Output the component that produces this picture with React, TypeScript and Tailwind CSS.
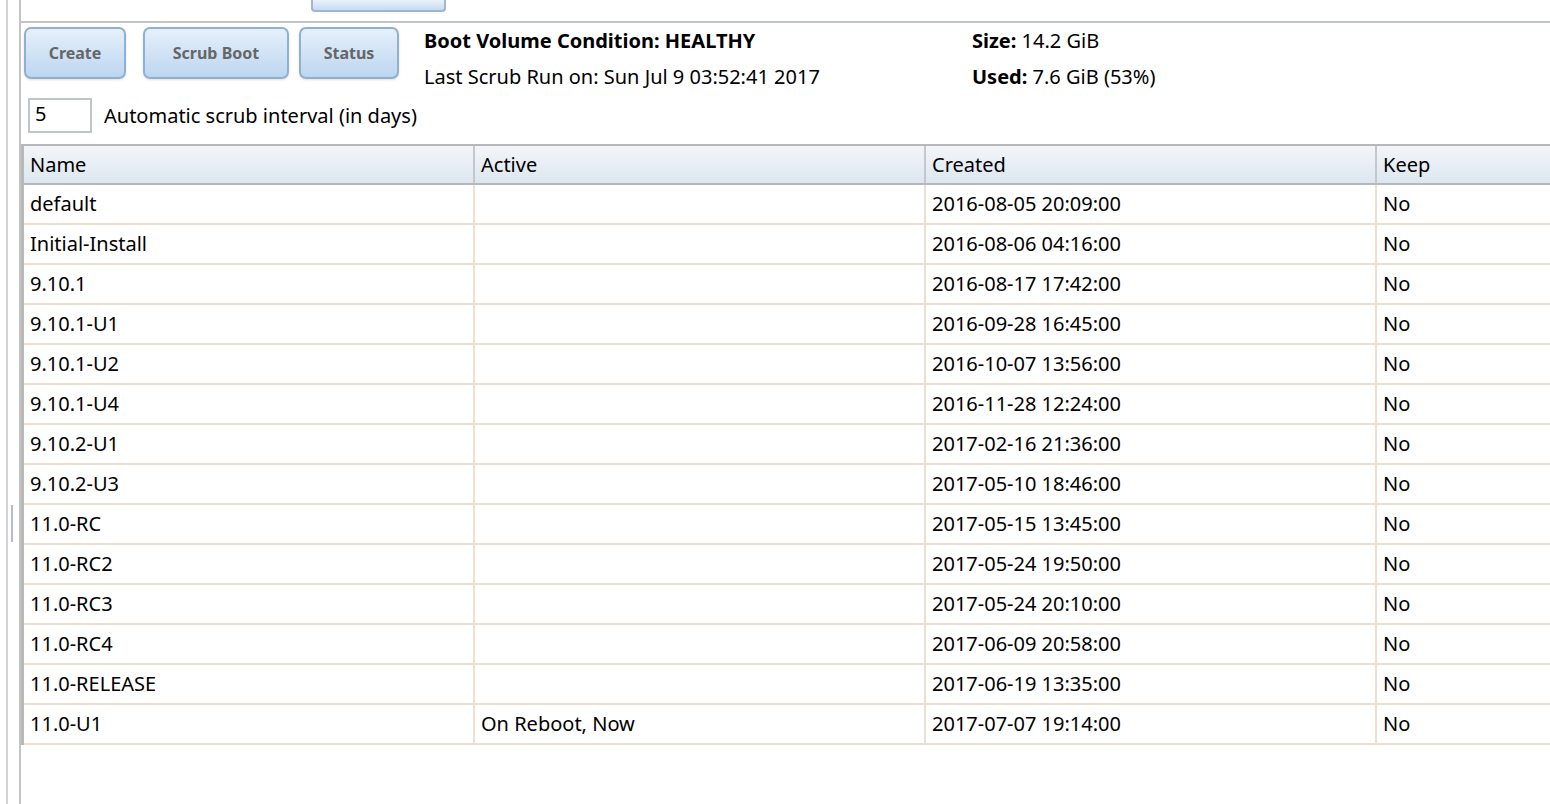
const rows: [string, string, string][] = [
  ["default", "", "2016-08-05 20:09:00"],
  ["Initial-Install", "", "2016-08-06 04:16:00"],
  ["9.10.1", "", "2016-08-17 17:42:00"],
  ["9.10.1-U1", "", "2016-09-28 16:45:00"],
  ["9.10.1-U2", "", "2016-10-07 13:56:00"],
  ["9.10.1-U4", "", "2016-11-28 12:24:00"],
  ["9.10.2-U1", "", "2017-02-16 21:36:00"],
  ["9.10.2-U3", "", "2017-05-10 18:46:00"],
  ["11.0-RC", "", "2017-05-15 13:45:00"],
  ["11.0-RC2", "", "2017-05-24 19:50:00"],
  ["11.0-RC3", "", "2017-05-24 20:10:00"],
  ["11.0-RC4", "", "2017-06-09 20:58:00"],
  ["11.0-RELEASE", "", "2017-06-19 13:35:00"],
  ["11.0-U1", "On Reboot, Now", "2017-07-07 19:14:00"],
]

const btn =
  "h-[52px] rounded-[7px] border-2 border-[#8fb0d0] bg-gradient-to-b from-[#e6f0fb] to-[#bcd6f0] text-[16px] font-bold text-[#666] shadow-sm"

export default function App() {
  return (
    <div className="relative h-[804px] w-[1550px] overflow-hidden bg-white [font-family:'DejaVu_Sans',Verdana,sans-serif] text-[20px] text-black">
      <div className="absolute left-[6px] top-0 h-full w-[2px] bg-[#d4d4d4]" />
      <div className="absolute left-[11px] top-[505px] h-[37px] w-[2px] bg-[#b8bcc8]" />
      <div className="absolute left-[19px] top-0 h-full w-[2px] bg-[#c4c4c4]" />
      <div className="ml-[21px] flex flex-col">
        <div className="h-[23px] border-b-2 border-[#bfc3cc]">
          <div className="ml-[290px] h-[12px] w-[135px] rounded-b-[4px] border-2 border-t-0 border-[#9cb8d4] bg-gradient-to-b from-[#eaf2fb] to-[#c6dcf2]" />
        </div>
        <div className="flex pt-[4px]">
          <div className="ml-[3px] flex w-[400px] gap-[10px]">
            <button className={btn + " w-[102px]"}>Create</button>
            <button className={btn + " ml-[7px] w-[146px]"}>Scrub Boot</button>
            <button className={btn + " w-[100px]"}>Status</button>
          </div>
          <div className="flex w-[548px] flex-col gap-[8px] leading-[28px] whitespace-nowrap">
            <div className="font-bold">Boot Volume Condition: HEALTHY</div>
            <div>Last Scrub Run on: Sun Jul 9 03:52:41 2017</div>
          </div>
          <div className="flex flex-col gap-[8px] leading-[28px] whitespace-nowrap">
            <div><b>Size:</b> 14.2 GiB</div>
            <div><b>Used:</b> 7.6 GiB (53%)</div>
          </div>
        </div>
        <div className="mt-[7px] flex items-center gap-[12px] pl-[7px]">
          <div className="flex h-[35px] w-[64px] items-end border-2 border-[#c0c4cc] px-[5px] pb-[2px]">5</div>
          <span>Automatic scrub interval (in days)</span>
        </div>
        <div className="mt-[11px] border-l-[3px] border-[#b8b8b8]">
          <div className="grid h-[41px] grid-cols-[451px_451px_451px_1fr] border-y-2 border-[#b6b8bc] bg-gradient-to-b from-[#f2f6fa] to-[#dde6ef]">
            {["Name", "Active", "Created", "Keep"].map((h, i) => (
              <div key={h} className={"flex items-center pl-[6px] " + (i < 3 ? "border-r-2 border-[#c4c8cc]" : "")}>
                {h}
              </div>
            ))}
          </div>
          {rows.map(([n, a, c]) => (
            <div key={n} className="grid h-[40px] grid-cols-[451px_451px_451px_1fr] border-b-2 border-[#eee0d0]">
              <div className="flex items-center border-r-2 border-[#eee0d0] pl-[6px]">{n}</div>
              <div className="flex items-center border-r-2 border-[#eee0d0] pl-[6px]">{a}</div>
              <div className="flex items-center border-r-2 border-[#eee0d0] pl-[6px]">{c}</div>
              <div className="flex items-center pl-[6px]">No</div>
            </div>
          ))}
        </div>
      </div>
    </div>
  )
}
